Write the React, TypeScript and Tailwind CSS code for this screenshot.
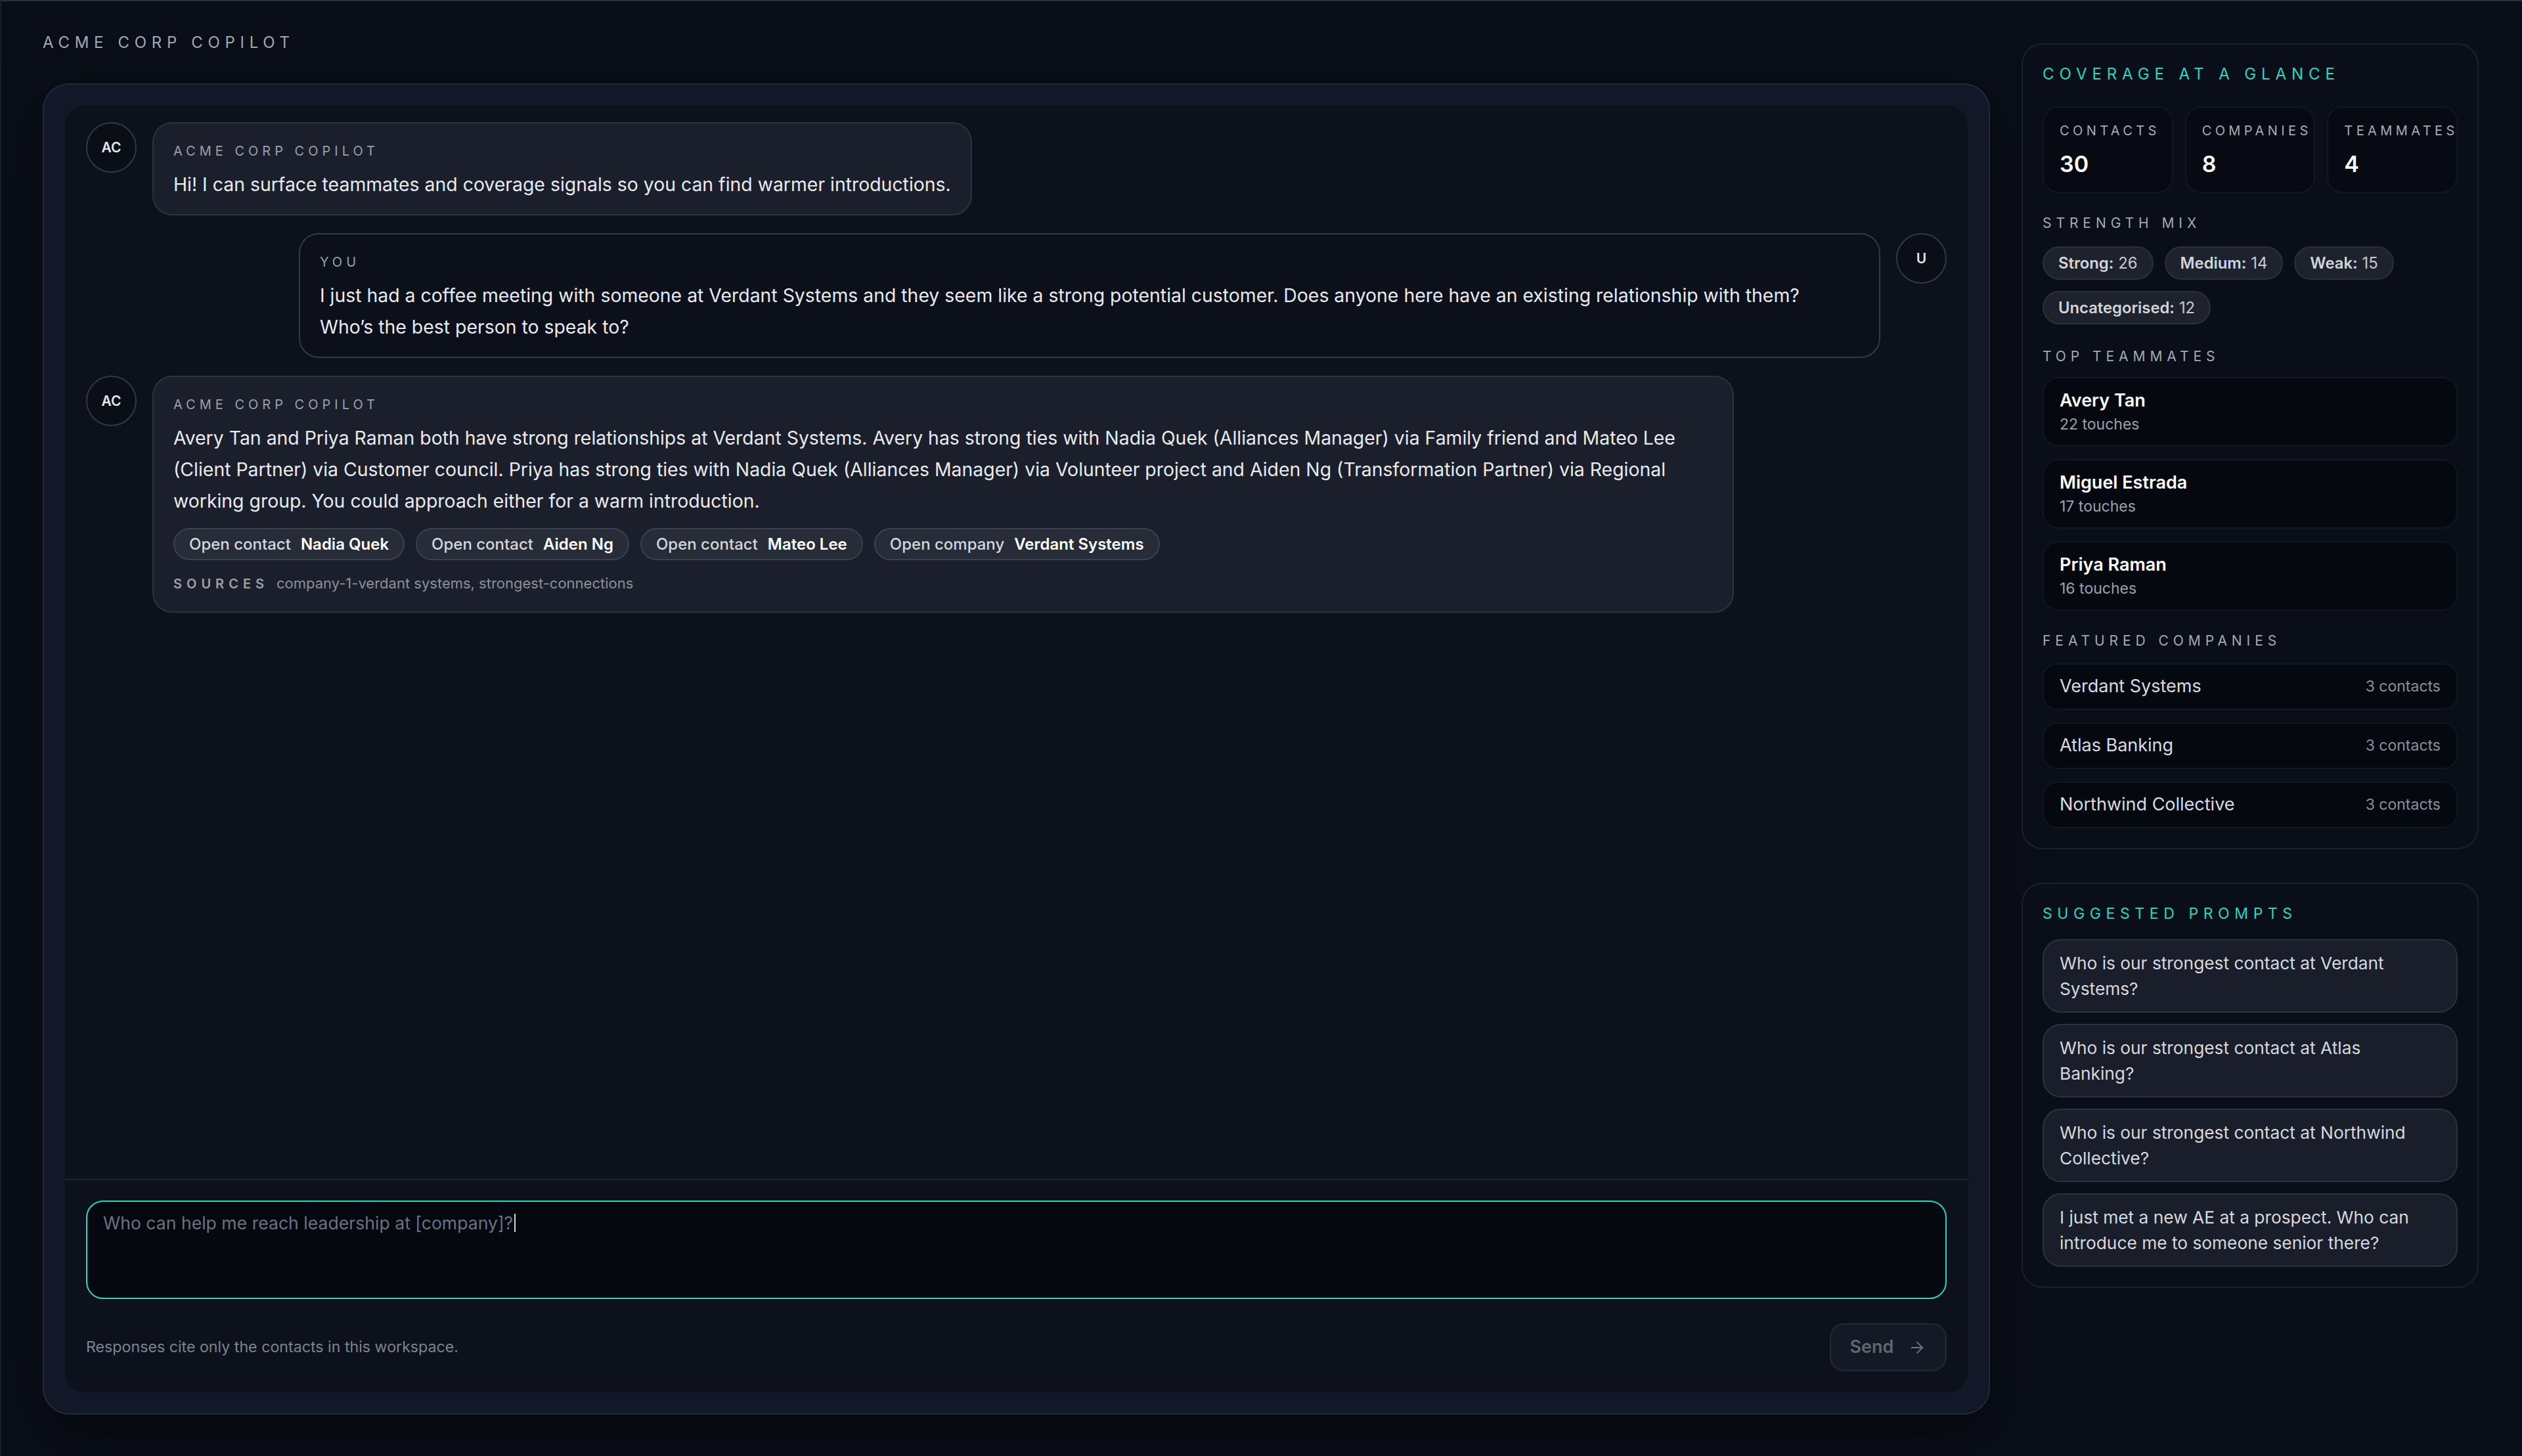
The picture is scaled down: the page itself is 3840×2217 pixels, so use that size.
import { ArrowRight } from "lucide-react";

type Chip = { action: string; target: string };

const chips: Chip[] = [
  { action: "Open contact", target: "Nadia Quek" },
  { action: "Open contact", target: "Aiden Ng" },
  { action: "Open contact", target: "Mateo Lee" },
  { action: "Open company", target: "Verdant Systems" },
];

const stats = [
  { label: "CONTACTS", value: "30" },
  { label: "COMPANIES", value: "8" },
  { label: "TEAMMATES", value: "4" },
];

const strength = [
  { label: "Strong:", value: "26" },
  { label: "Medium:", value: "14" },
  { label: "Weak:", value: "15" },
  { label: "Uncategorised:", value: "12" },
];

const teammates = [
  { name: "Avery Tan", touches: "22 touches" },
  { name: "Miguel Estrada", touches: "17 touches" },
  { name: "Priya Raman", touches: "16 touches" },
];

const companies = ["Verdant Systems", "Atlas Banking", "Northwind Collective"];

const prompts = [
  ["Who is our strongest contact at Verdant", "Systems?"],
  ["Who is our strongest contact at Atlas", "Banking?"],
  ["Who is our strongest contact at Northwind", "Collective?"],
  ["I just met a new AE at a prospect. Who can", "introduce me to someone senior there?"],
];

function Avatar({ text }: { text: string }) {
  return (
    <div className="w-[77px] h-[77px] shrink-0 rounded-full border-2 border-[#323946] bg-[#0a0e17] flex items-center justify-center text-[21px] font-semibold text-[#e5e7eb]">
      {text}
    </div>
  );
}

function BubbleLabel({ children }: { children: string }) {
  return (
    <div className="text-[20px] leading-[30px] tracking-[0.3em] text-[#9aa1ad]">{children}</div>
  );
}

function SectionLabel({ children }: { children: string }) {
  return (
    <div className="text-[21px] leading-[28px] tracking-[0.33em] text-[#a3aab5] whitespace-nowrap">
      {children}
    </div>
  );
}

export default function App() {
  return (
    <div className="h-screen w-full overflow-hidden bg-[#0a0e18] border-t-2 border-l-2 border-t-[#2a2f3a] border-l-[#1a1e28] font-['Inter','Noto_Sans',sans-serif] text-[#e5e7eb] flex gap-[48px] pl-[63px] pr-[66px]">
      <main className="flex-1 min-w-0 flex flex-col pt-[46px] pb-[63px]">
        <h1 className="text-[24px] leading-[34px] tracking-[0.32em] font-normal text-[#a3aab5]">
          ACME CORP COPILOT
        </h1>

        <div className="mt-[45px] flex-1 flex rounded-[40px] border-2 border-[#232a37] bg-[#121827] p-[32px] shadow-[0_30px_90px_rgba(0,0,0,0.45)]">
          <div className="flex-1 flex flex-col rounded-[30px] bg-[#0c111c]">
            {/* Messages */}
            <div className="flex-1 flex flex-col gap-[27px] px-[32px] pt-[25px]">
              <div className="flex items-start gap-[24px]">
                <Avatar text="AC" />
                <div className="max-w-[85%] rounded-[30px] border-2 border-[#2c3340] bg-[#1a1f2b] px-[30px] pt-[27px] pb-[21px]">
                  <BubbleLabel>ACME CORP COPILOT</BubbleLabel>
                  <p className="mt-[12px] text-[28.4px] leading-[48px] text-[#e8eaee]">
                    Hi! I can surface teammates and coverage signals so you can find warmer introductions.
                  </p>
                </div>
              </div>

              <div className="flex items-start justify-end gap-[24px]">
                <div className="w-[85%] rounded-[30px] border-2 border-[#333a47] bg-[#0b101a] px-[30px] pt-[27px] pb-[21px]">
                  <BubbleLabel>YOU</BubbleLabel>
                  <p className="mt-[12px] text-[28.4px] leading-[48px] text-[#e8eaee]">
                    I just had a coffee meeting with someone at Verdant Systems and they seem like a strong potential
                    customer. Does anyone here have an existing relationship with them?
                    <br />
                    Who’s the best person to speak to?
                  </p>
                </div>
                <Avatar text="U" />
              </div>

              <div className="flex items-start gap-[24px]">
                <Avatar text="AC" />
                <div className="max-w-[85%] rounded-[30px] border-2 border-[#2c3340] bg-[#1a1f2b] px-[30px] pt-[27px] pb-[27px]">
                  <BubbleLabel>ACME CORP COPILOT</BubbleLabel>
                  <p className="mt-[12px] text-[28.4px] leading-[48px] text-[#e8eaee]">
                    Avery Tan and Priya Raman both have strong relationships at Verdant Systems. Avery has strong ties
                    with Nadia Quek (Alliances Manager) via Family friend and Mateo Lee (Client Partner) via Customer
                    council. Priya has strong ties with Nadia Quek (Alliances Manager) via Volunteer project and Aiden Ng
                    (Transformation Partner) via Regional working group. You could approach either for a warm
                    introduction.
                  </p>
                  <div className="mt-[17px] flex flex-wrap gap-[17px]">
                    {chips.map((c) => (
                      <button
                        key={c.target}
                        className="h-[49px] px-[22px] rounded-full border-2 border-[#3b4250] bg-[#262c38] flex items-center gap-[15px] text-[24px]"
                      >
                        <span className="font-medium text-[#d3d7dd]">{c.action}</span>
                        <span className="font-semibold text-white">{c.target}</span>
                      </button>
                    ))}
                  </div>
                  <div className="mt-[20px] flex items-baseline gap-[12px]">
                    <span className="text-[20px] leading-[30px] font-semibold tracking-[0.35em] text-[#9aa1ad]">
                      SOURCES
                    </span>
                    <span className="text-[22px] leading-[30px] text-[#8a919c]">
                      company-1-verdant systems, strongest-connections
                    </span>
                  </div>
                </div>
              </div>
            </div>

            {/* Composer */}
            <div className="border-t-2 border-[#1c2230] px-[32px] pt-[31px] pb-[32px]">
              <div className="h-[150px] rounded-[26px] border-2 border-[#2dd4bf] bg-[#05080f] px-[24px] pt-[12px]">
                <span className="text-[26.6px] leading-[40px] text-[#6b7280]">
                  Who can help me reach leadership at [company]?
                </span>
                <span className="inline-block w-[2px] h-[28px] ml-[2px] bg-[#d1d5db] align-[-4px]" />
              </div>
              <div className="mt-[37px] flex items-center justify-between">
                <span className="text-[23.2px] text-[#7c8491]">Responses cite only the contacts in this workspace.</span>
                <button className="h-[73px] w-[178px] rounded-[22px] border-2 border-[#222937] bg-[#131925] flex items-center justify-center gap-[22px] text-[27px] font-semibold text-[#5d6870]">
                  Send
                  <ArrowRight size={28} strokeWidth={1.6} className="text-[#6b767d]" />
                </button>
              </div>
            </div>
          </div>
        </div>
      </main>

      <aside className="w-[696px] shrink-0 pt-[64px] flex flex-col gap-[51px]">
        <section className="rounded-[32px] border-2 border-[#1b212c] bg-[#0a0e18] p-[30px]">
          <div className="text-[24px] leading-[30px] tracking-[0.33em] text-[#2dd4bf]">COVERAGE AT A GLANCE</div>

          <div className="mt-[34px] grid grid-cols-3 gap-[18px]">
            {stats.map((s) => (
              <div
                key={s.label}
                className="h-[132px] rounded-[24px] border-2 border-[#121722] bg-[#070a12] px-[24px] pt-[21px]"
              >
                <div className="text-[20px] leading-[28px] tracking-[0.27em] text-[#a5acb7] whitespace-nowrap">
                  {s.label}
                </div>
                <div className="mt-[15px] text-[34px] leading-[44px] font-semibold text-white">{s.value}</div>
              </div>
            ))}
          </div>

          <div className="mt-[32px]">
            <SectionLabel>STRENGTH MIX</SectionLabel>
          </div>
          <div className="mt-[21px] flex flex-wrap gap-x-[17px] gap-y-[17px]">
            {strength.map((s) => (
              <span
                key={s.label}
                className="h-[51px] px-[22px] rounded-full border-2 border-[#2a303c] bg-[#1d222d] flex items-center text-[23.8px]"
              >
                <span className="font-semibold text-[#d1d5db]">{s.label}</span>
                <span className="ml-[7px] text-[#c5cad2]">{s.value}</span>
              </span>
            ))}
          </div>

          <div className="mt-[35px]">
            <SectionLabel>TOP TEAMMATES</SectionLabel>
          </div>
          <div className="mt-[17px] flex flex-col gap-[19px]">
            {teammates.map((t) => (
              <div
                key={t.name}
                className="h-[106px] rounded-[24px] border-2 border-[#11161f] bg-[#05080f] px-[24px] flex flex-col justify-center"
              >
                <div className="text-[27px] leading-[38px] font-semibold text-white">{t.name}</div>
                <div className="text-[23px] leading-[34px] text-[#9aa1ac]">{t.touches}</div>
              </div>
            ))}
          </div>

          <div className="mt-[32px]">
            <SectionLabel>FEATURED COMPANIES</SectionLabel>
          </div>
          <div className="mt-[20px] flex flex-col gap-[19px]">
            {companies.map((c) => (
              <div
                key={c}
                className="h-[71px] rounded-[22px] border-2 border-[#11161f] bg-[#05080f] px-[24px] flex items-center justify-between"
              >
                <span className="text-[27px] text-[#d8dce2]">{c}</span>
                <span className="text-[23px] text-[#8a919c]">3 contacts</span>
              </div>
            ))}
          </div>
        </section>

        <section className="rounded-[32px] border-2 border-[#1b212c] bg-[#0a0e18] p-[30px]">
          <div className="text-[23px] leading-[30px] tracking-[0.33em] text-[#2dd4bf]">SUGGESTED PROMPTS</div>
          <div className="mt-[24px] flex flex-col gap-[17px]">
            {prompts.map((p) => (
              <button
                key={p[0]}
                className="rounded-[28px] border-2 border-[#2c3340] bg-[#191e2a] px-[24px] py-[15px] text-left text-[26.3px] leading-[39px] text-[#d5d9df]"
              >
                <span className="block">{p[0]}</span>
                <span className="block">{p[1]}</span>
              </button>
            ))}
          </div>
        </section>
      </aside>
    </div>
  );
}
